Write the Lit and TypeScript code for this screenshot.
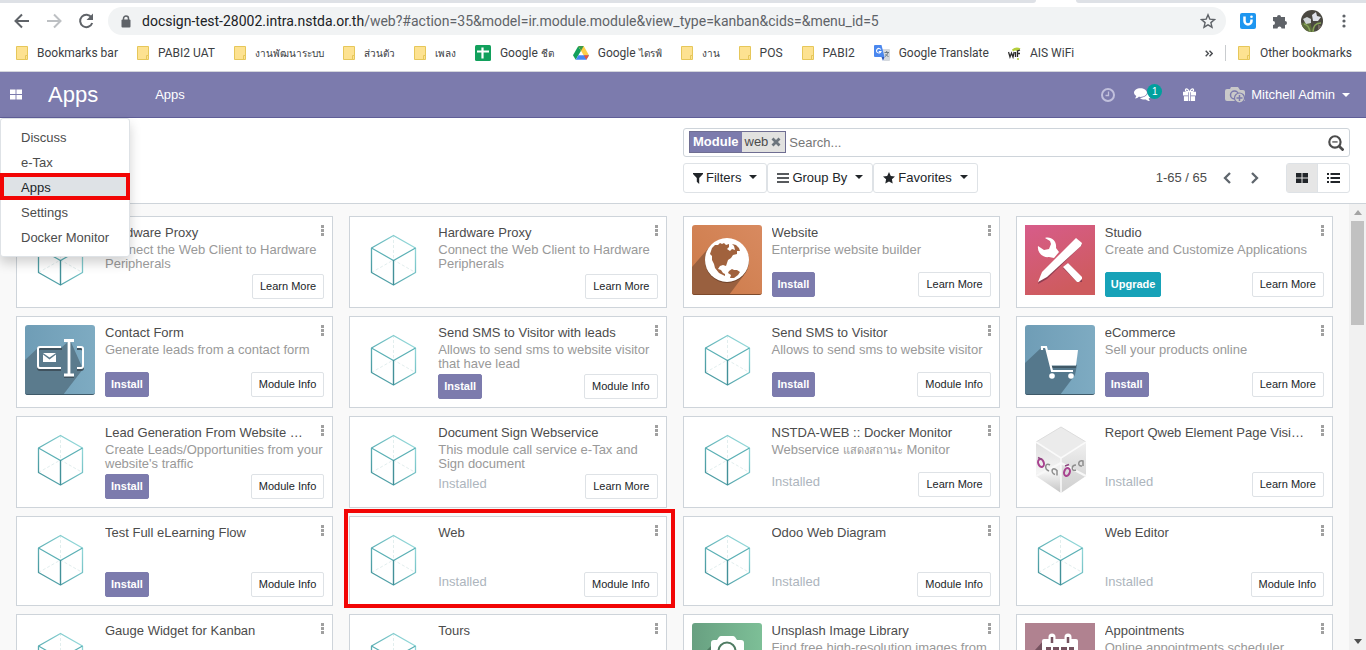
import { LitElement, html, svg, css, nothing } from "lit";
import { customElement, property } from "lit/decorators.js";

type Action = "install" | "upgrade" | "installed";

interface Module {
  name: string;
  summary?: string;
  action: Action;
  info: string;
  icon?: string;
  marked?: boolean;
}

const MODULES: Module[] = [
  { name: "Hardware Proxy", summary: "Connect the Web Client to Hardware Peripherals", action: "installed", info: "Learn More", icon: "cube-plain" },
  { name: "Hardware Proxy", summary: "Connect the Web Client to Hardware Peripherals", action: "installed", info: "Learn More", icon: "cube-plain" },
  { name: "Website", summary: "Enterprise website builder", action: "install", info: "Learn More", icon: "globe" },
  { name: "Studio", summary: "Create and Customize Applications", action: "upgrade", info: "Learn More", icon: "studio" },
  { name: "Contact Form", summary: "Generate leads from a contact form", action: "install", info: "Module Info", icon: "form" },
  { name: "Send SMS to Visitor with leads", summary: "Allows to send sms to website visitor that have lead", action: "install", info: "Module Info" },
  { name: "Send SMS to Visitor", summary: "Allows to send sms to website visitor", action: "install", info: "Module Info" },
  { name: "eCommerce", summary: "Sell your products online", action: "install", info: "Learn More", icon: "cart" },
  { name: "Lead Generation From Website Visits", summary: "Create Leads/Opportunities from your website's traffic", action: "install", info: "Module Info" },
  { name: "Document Sign Webservice", summary: "This module call service e-Tax and Sign document", action: "installed", info: "Learn More" },
  { name: "NSTDA-WEB :: Docker Monitor", summary: "Webservice แสดงสถานะ Monitor", action: "installed", info: "Learn More" },
  { name: "Report Qweb Element Page Visibility", action: "installed", info: "Learn More", icon: "oca" },
  { name: "Test Full eLearning Flow", action: "install", info: "Module Info" },
  { name: "Web", action: "installed", info: "Module Info", marked: true },
  { name: "Odoo Web Diagram", action: "installed", info: "Module Info" },
  { name: "Web Editor", action: "installed", info: "Module Info" },
  { name: "Gauge Widget for Kanban", action: "installed", info: "Module Info" },
  { name: "Tours", action: "installed", info: "Module Info" },
  { name: "Unsplash Image Library", summary: "Find free high-resolution images from Unsplash", action: "install", info: "Module Info", icon: "camera" },
  { name: "Appointments", summary: "Online appointments scheduler", action: "upgrade", info: "Learn More", icon: "calendar" },
];

// Wraps each run of Thai script so that it can have its own font and size.
const withThai = (text: string) =>
  text.split(/([\u0E00-\u0E7F]+)/).map((part, i) => (i % 2 ? html`<span class="thai" lang="th">${part}</span>` : part));

const cube = svg`
  <defs>
    <linearGradient id="edge" x1="0" y1="1" x2="1" y2="0">
      <stop offset="0" stop-color="#3f8f97"/><stop offset="0.55" stop-color="#6cbcc0"/><stop offset="1" stop-color="#a2e2e2"/>
    </linearGradient>
  </defs>
  <path d="M35.5 10v25M13.5 47.5l22-12.500l22 12.500" fill="none" stroke="#e2eeee" stroke-width="1" stroke-dasharray="3 2"/>
  <path d="M35.500 10.500L57.500 23V47.500L35.500 60L13.500 47.500V23Z" fill="none" stroke="url(#edge)" stroke-width="1.300" stroke-linejoin="round"/>
  <path d="M13.500 23L35.500 35.500L57.500 23" fill="none" stroke="#5bb0b5" stroke-width="1.200"/>
  <path d="M35.500 35V60" fill="none" stroke="#439199" stroke-width="1.400"/>`;

const artwork: Record<string, unknown> = {
  cube,
  globe: svg`
    <defs><linearGradient id="g" x1="0" y1="1" x2="1" y2="0"><stop offset="0" stop-color="#cc7a48"/><stop offset="1" stop-color="#d88a60"/></linearGradient></defs>
    <rect width="70" height="70" rx="3" fill="url(#g)"/>
    <path d="M0 42L20 19L52 50L37 70H3A3 3 0 0 1 0 67Z" fill="#99603f"/>
    <path d="M0 67a3 3 0 0 0 3 3h64a3 3 0 0 0 3-3a3 2 0 0 1-3 2H3a3 2 0 0 1-3-2Z" fill="#7d4a2c"/>
    <circle cx="35" cy="36" r="22" fill="#6e4229"/><circle cx="35" cy="35" r="22" fill="#fff"/>
    <path d="M20 23l3-3 3 0 2-2 2 1 2-1 2 2 3-1 0 3-2 2 3 2 2-2 3 1-1-4-2-2 4 1 3 3 1 3-3 0 0 3-4 1-2 3-3 2-1 3-1 3-3-1-3 1-2 3 3 1 2 3 2 1 0 2-6-3-4-5-1-4-2-4 0-4-2-2Z" fill="#a1623d"/>
    <path d="M37 46l3-2 2 1 3 0 3 2-2 3-4 3-4 0 1-3-3-2Z" fill="#a1623d"/>`,
  studio: svg`
    <defs><linearGradient id="s" x1="0" y1="0" x2="0.400" y2="1"><stop offset="0" stop-color="#d75c8a"/><stop offset="1" stop-color="#ce5b5e"/></linearGradient></defs>
    <rect width="70" height="70" fill="url(#s)"/>
    <g fill="#8f3e50" transform="translate(0 1)"><path d="M51 13l6 6-35 34-9 5 4-11Z"/><path d="M38 42l5-5 14 15v4h-5Z"/></g>
    <path d="M20 13c6-2 12 3 11 10l3 4-5 6-5-1c-6 1-12-4-11-11l6 4 5-1 2-5-1-3Z" fill="#fff"/>
    <path d="M51 13l6 5-1 3-34 31-9 5 4-10Z" fill="#fff"/>
    <path d="M38 42l5-4 14 14v2l-3 3h-2Z" fill="#fff"/>`,
  form: svg`
    <defs><linearGradient id="f" x1="0" y1="0" x2="1" y2="0"><stop offset="0" stop-color="#6f9db6"/><stop offset="1" stop-color="#7eabc2"/></linearGradient></defs>
    <rect width="70" height="70" rx="3" fill="url(#f)"/>
    <path d="M0 35L15 21L36 23L45 15L58 44L38 70H3A3 3 0 0 1 0 67Z" fill="#5b7b8d"/>
    <path d="M0 67a3 3 0 0 0 3 3h64a3 3 0 0 0 3-3a3 2 0 0 1-3 2H3a3 2 0 0 1-3-2Z" fill="#3f5a69"/>
    <g fill="none" stroke="#3f525e" stroke-width="2" transform="translate(0 2)"><path d="M37 22H15a2 2 0 0 0-2 2v17a2 2 0 0 0 2 2h21M52 22h4a2 2 0 0 1 2 2v17a2 2 0 0 1-2 2h-4M39 50h10"/></g>
    <g fill="none" stroke="#fff" stroke-width="2"><path d="M36 22H15a2 2 0 0 0-2 2v17a2 2 0 0 0 2 2h21M52 22h4a2 2 0 0 1 2 2v17a2 2 0 0 1-2 2h-4"/><path d="M39 15.500h10M44 15v35M39 50h10" stroke-width="2.800"/></g>
    <path d="M18 28h13l-6.500 4.500Z M18 29.500l6.500 5 6.500-5V37H18Z" fill="#fff"/>`,
  cart: svg`
    <defs><linearGradient id="c" x1="0" y1="0" x2="1" y2="0"><stop offset="0" stop-color="#6f9db6"/><stop offset="1" stop-color="#7eabc2"/></linearGradient></defs>
    <rect width="70" height="70" rx="3" fill="url(#c)"/>
    <path d="M0 38L17 22L52 40L50 50L35 70H3A3 3 0 0 1 0 67Z" fill="#55788c"/>
    <path d="M0 67a3 3 0 0 0 3 3h64a3 3 0 0 0 3-3a3 2 0 0 1-3 2H3a3 2 0 0 1-3-2Z" fill="#3f5a69"/>
    <path d="M27 42h24" stroke="#405866" stroke-width="2"/>
    <path d="M17 25v-3h4l6 24h21" fill="none" stroke="#fff" stroke-width="2.200"/>
    <path d="M22 25h31l-2 15.500H26Z" fill="#fff"/>
    <circle cx="27" cy="51" r="2.800" fill="#fff"/><circle cx="46" cy="51" r="2.800" fill="#fff"/>`,
  oca: svg`
    <defs>
      <linearGradient id="o1" x1="0" y1="0" x2="0" y2="1"><stop offset="0" stop-color="#e0e0e0"/><stop offset="0.600" stop-color="#f4f4f4"/><stop offset="1" stop-color="#c4c4c4"/></linearGradient>
      <linearGradient id="o2" x1="0" y1="0" x2="0" y2="1"><stop offset="0" stop-color="#f0f0f0"/><stop offset="0.500" stop-color="#dedede"/><stop offset="1" stop-color="#cfcfcf"/></linearGradient>
    </defs>
    <path d="M36 2L61 17L36 33L11 17Z" fill="#ebebeb" stroke="#ddd"/>
    <path d="M11 17L36 33V68L11 51Z" fill="url(#o1)"/>
    <path d="M61 17L36 33V68L61 51Z" fill="url(#o2)"/>
    <path d="M11 51L36 38L61 51" fill="none" stroke="#f8f8f8" stroke-width="2"/>
    <path d="M11 17L36 33L61 17M36 33V68" fill="none" stroke="#fafafa" stroke-width="1.500"/>
    <g fill="none" stroke-width="1.500">
      <ellipse cx="16" cy="38" rx="2.800" ry="4" stroke="#a8428f" stroke-width="2" transform="rotate(-20 16 38)"/>
      <path d="M13 32.500l4 2" stroke="#8d4a80"/>
      <path d="M25 40c-5-3-6 4-1 6" stroke="#8d8d8d"/><path d="M32 50.500v-5c-5-5-7 2-2 4" stroke="#8d8d8d"/>
      <ellipse cx="42" cy="47" rx="2.800" ry="4" stroke="#a8428f" stroke-width="2" transform="rotate(20 42 47)"/>
      <path d="M40 41l4-1.500" stroke="#8d4a80"/>
      <path d="M51 40c-5 0-5 7 0 5" stroke="#8d8d8d"/><path d="M58 41v-5c-5-2-6 6-1 5" stroke="#8d8d8d"/>
    </g>`,
  camera: svg`
    <defs><linearGradient id="u" x1="0" y1="0" x2="1" y2="0"><stop offset="0" stop-color="#68a081"/><stop offset="1" stop-color="#7dbf97"/></linearGradient></defs>
    <rect width="70" height="70" rx="3" fill="url(#u)"/>
    <path d="M0 42L20 22L50 70H0Z" fill="#4f7c63"/>
    <path d="M27 14q1-1 2-1h12q1 0 2 1l2 3h4a3 3 0 0 1 3 3v30H19V20a3 3 0 0 1 3-3h3Z" fill="#fff"/>
    <circle cx="35" cy="28" r="8.500" fill="none" stroke="#4f7c63" stroke-width="2"/>`,
  calendar: svg`
    <rect width="70" height="70" fill="#b08290"/>
    <path d="M0 38L20 16L54 60V70H0Z" fill="#75525f"/>
    <path d="M17 18a2 2 0 0 1 2-2h32a2 2 0 0 1 2 2v36H17Z" fill="#fff"/>
    <path d="M27 14v5M43 14v5" stroke="#fff" stroke-width="7" stroke-linecap="round"/>
    <path d="M27 14v6M43 14v6" stroke="#75525f" stroke-width="2.500"/>
    <path d="M21 24h5v4h-5zM28 24h6v4h-6zM36 24h6v4h-6zM44 24h5v4h-5z" fill="#75525f"/>`,
};

const folder = html`<svg viewBox="0 0 12 14" width="12" height="14" aria-hidden="true">
  <path d="M.5.500h11v10h-1.500v3H.5Z" fill="#fde291" stroke="#e6c75a"/><path d="M9.500 9.500h2v4h-2z" fill="#fde291" stroke="#e6c75a"/></svg>`;

const bookmarkIcons: Record<string, unknown> = {
  folder,
  sheet: html`<svg viewBox="0 0 16 16" width="16" height="16" aria-hidden="true"><rect width="16" height="16" rx="1.500" fill="#12a05c"/><path d="M7.500 2.500v11M2 6.500h12" stroke="#fff" stroke-width="2.200"/></svg>`,
  drive: html`<svg viewBox="0 0 16 14" width="16" height="14" aria-hidden="true"><path d="M5.300 0L8 4.700 2.700 13.800 0 9.300Z" fill="#12a05c"/><path d="M5.300 0h5.400L16 9.300h-5.400Z" fill="#ffcf48"/><path d="M5.300 0h5.400L8 4.700Z" fill="#3b9a4a"/><path d="M5.400 9.300H16l-2.700 4.500H2.700Z" fill="#4687f4"/><path d="M13.300 13.800L10.800 9.300H16Z" fill="#e8553c"/></svg>`,
  translate: html`<svg viewBox="0 0 16 16" width="16" height="16" aria-hidden="true"><path d="M7 4h8a1 1 0 0 1 1 1v10a1 1 0 0 1-1 1H10Z" fill="#d5d9de"/><path d="M1 0h6.500l3 12H1a1 1 0 0 1-1-1V1a1 1 0 0 1 1-1Z" fill="#4a87ee"/><path d="M7.500 12h3L9 16Z" fill="#3059b8"/><path d="M6.800 4.500A2.300 2.300 0 1 0 7 6.500H4.800" fill="none" stroke="#fff" stroke-width="1.100"/><path d="M10.500 7.500h4.500M12.700 6v1.500M14 7.500c-.5 2-1.500 3-3 4M11.500 9l3 3" fill="none" stroke="#62717c" stroke-width=".9"/></svg>`,
  wifi: html`<svg viewBox="0 0 13 13" width="13" height="13" aria-hidden="true"><path d="M4 2.500Q8-1 12.500 1.500L10 4.500Q7 2.500 5 4.500Z" fill="#b5cf3c"/><path d="M.5 5l1.500 5 1.500-4 1.500 4 1.200-5M7.500 5v5M9.500 10V4l2.500-1M9.500 6.500h2.500" fill="none" stroke="#2b2b2b" stroke-width="1.300"/><circle cx="10" cy="12" r="1" fill="#b5cf3c"/></svg>`,
};

const BOOKMARKS = [
  ["folder", "Bookmarks bar"], ["folder", "PABI2 UAT"], ["folder", "งานพัฒนาระบบ"], ["folder", "ส่วนตัว"], ["folder", "เพลง"],
  ["sheet", "Google ชีต"], ["drive", "Google ไดรฟ์"], ["folder", "งาน"], ["folder", "POS"], ["folder", "PABI2"],
  ["translate", "Google Translate"], ["wifi", "AIS WiFi"],
];

const caret = html`<svg class="caret" viewBox="0 0 8 4" width="8" height="4" aria-hidden="true"><path d="M0 0h8L4 4Z" fill="currentColor"/></svg>`;

@customElement("browser-bar")
export class BrowserBar extends LitElement {
  static styles = css`
    :host { display: block; background: #fff; color: #3c4043; font: 12px/16px Roboto, sans-serif; border-bottom: 1px solid #d4d6dc; }
    .tabs { display: flex; gap: 40px; height: 3px; }
    .strip { background: #dee1e6; flex: 1038; border-radius: 0 0 3px 0; }
    .strip.rest { flex: 291; border-radius: 0 0 0 3px; }
    .tools { display: flex; align-items: center; height: 36px; padding: 0 11px 0 12px; }
    button { border: 0; padding: 0; background: none; color: #5f6368; display: grid; place-items: center; width: 20px; height: 20px; margin-right: 12px; }
    .nav { display: flex; }
    .address { display: flex; align-items: center; flex: 1; min-width: 0; height: 28px; border-radius: 14px; background: #f1f3f4; padding: 0 8px 0 13px; margin-right: 11px; }
    .lock { margin-right: 11px; flex: none; }
    .url { flex: 1; min-width: 0; overflow: hidden; white-space: nowrap; font-size: 14px; line-height: 20px; color: #5f6368; }
    .host { color: #202124; }
    .address button { margin: 0; }
    .icons { display: flex; align-items: center; gap: 11px; }
    .icons button { margin: 0; width: 21px; height: 22px; }
    .icons .menu { width: 22px; }
    .marks { display: flex; align-items: center; height: 28px; padding: 0 14px 4px 16px; }
    a { display: flex; align-items: center; color: inherit; text-decoration: none; white-space: nowrap; }
    .list { display: flex; gap: 19px; flex: 1; min-width: 0; overflow: hidden; }
    .list a { gap: 9px; }
    .thai { font-family: "Noto Sans", "Open Sans", sans-serif; font-size: 10px; line-height: 14px; }
    .more { font-size: 18px; margin: 0 6px 0 0; color: #4a4d51; }
    .other { gap: 10px; border-left: 1px solid #c9cccf; padding-left: 12px; }
  `;

  render() {
    return html`
      <div class="tabs"><div class="strip"></div><div class="strip rest"></div></div>
      <div class="tools">
        <div class="nav">
          <button aria-label="Back"><svg viewBox="0 0 16 16" width="16" height="16"><path d="M15 8H2M8 1.500L1.500 8 8 14.500" fill="none" stroke="#5f6368" stroke-width="2"/></svg></button>
          <button aria-label="Forward"><svg viewBox="0 0 16 16" width="16" height="16"><path d="M1 8h13M8 1.500L14.500 8 8 14.500" fill="none" stroke="#bdc0c3" stroke-width="2"/></svg></button>
          <button aria-label="Reload"><svg viewBox="0 0 16 16" width="16" height="16"><path d="M13.500 4.500A6.200 6.200 0 1 0 14.200 10" fill="none" stroke="#5f6368" stroke-width="2"/><path d="M15 .5v6.500H8.500Z" fill="#5f6368"/></svg></button>
        </div>
        <div class="address">
          <svg class="lock" viewBox="0 0 10 13" width="10" height="13" aria-hidden="true"><rect y="4.500" x=".5" width="9" height="8" rx="1" fill="#5f6368"/><path d="M2.500 5V3.500a2.500 2.500 0 0 1 5 0V5" fill="none" stroke="#5f6368" stroke-width="1.500"/></svg>
          <span class="url"><span class="host">docsign-test-28002.intra.nstda.or.th</span>/web?#action=35&amp;model=ir.module.module&amp;view_type=kanban&amp;cids=&amp;menu_id=5</span>
          <button aria-label="Bookmark this page"><svg viewBox="0 0 16 16" width="16" height="16"><path d="M8 1.800l1.800 4.300 4.700.4-3.600 3.100 1.100 4.600L8 11.800l-4 2.400 1.100-4.600L1.500 6.500l4.700-.4Z" fill="none" stroke="#5f6368" stroke-width="1.400"/></svg></button>
        </div>
        <div class="icons">
          <button aria-label="Extension"><svg viewBox="0 0 16 16" width="16" height="16"><rect width="16" height="16" rx="2" fill="#1e96f0"/><path d="M4.500 3.500v4.500a3.500 3.500 0 0 0 7 0V6.500" fill="none" stroke="#fff" stroke-width="2.500"/><circle cx="11.500" cy="3.700" r="1.300" fill="#fff"/></svg></button>
          <button aria-label="Extensions"><svg viewBox="0 0 16 16" width="16" height="16"><path d="M1 4h4a2 2 0 1 1 4 0h4v4a2 2 0 1 1 0 4v3.500H9.500a2 2 0 1 0-4 0H1V12a2 2 0 1 0 0-4Z" fill="#5f6368"/></svg></button>
          <button aria-label="Profile"><svg viewBox="0 0 22 22" width="22" height="22"><defs><clipPath id="av"><circle cx="11" cy="11" r="11"/></clipPath></defs><g clip-path="url(#av)"><rect width="22" height="22" fill="#4a4841"/><path d="M0 14l8-5 4 13H2Z" fill="#5c6b3c"/><path d="M12 22q0-9 8-9M9 22Q8 15 3 14" fill="none" stroke="#86a457" stroke-width="1.500"/><path d="M11 5l4-3 1 4 4 1-3 4-5 0Z" fill="#dfe2ea"/><path d="M2 9l4-2 4 2 0 4-5 1Z" fill="#cfd4d6"/><path d="M17 14l4 3-4 3Z" fill="#756b62"/></g></svg></button>
          <button class="menu" aria-label="Menu"><svg viewBox="0 0 4 14" width="4" height="14"><g fill="#5f6368"><circle cx="2" cy="2" r="1.600"/><circle cx="2" cy="7" r="1.600"/><circle cx="2" cy="12" r="1.600"/></g></svg></button>
        </div>
      </div>
      <div class="marks">
        <div class="list">${BOOKMARKS.map(([icon, label]) => html`<a href="#">${bookmarkIcons[icon]}<span>${withThai(label)}</span></a>`)}</div>
        <button class="more" aria-label="More bookmarks"><svg viewBox="0 0 8 7" width="8" height="7"><path d="M.7.700L3.400 3.500.7 6.300M4.500.700L7.200 3.500 4.500 6.300" fill="none" stroke="#4a4d51" stroke-width="1.400"/></svg></button>
        <a class="other" href="#">${folder}<span>Other bookmarks</span></a>
      </div>`;
  }
}

@customElement("module-card")
export class ModuleCard extends LitElement {
  @property({ attribute: false }) module!: Module;

  static styles = css`
    :host { display: block; min-width: 0; position: relative; box-sizing: border-box; background: #fff; border: 1px solid #ced4da; padding: 8px; }
    .body { display: flex; gap: 10px; }
    .art { flex: none; }
    .text { flex: 1; min-width: 0; }
    h2 { margin: 0; padding-right: 20px; font: inherit; line-height: 16px; padding-bottom: 2px; color: #4c4c4c; overflow: hidden; text-overflow: ellipsis; white-space: nowrap; }
    p { margin: 0 0 3px; min-height: 26px; line-height: 14px; color: #999; }
    .thai { font-family: "Noto Sans", "Open Sans", sans-serif; font-size: 11px; line-height: 14px; }
    .foot { display: flex; justify-content: space-between; align-items: flex-start; height: 25px; }
    .state { line-height: 20px; color: #adb5bd; }
    button { font: 11px/15px "Liberation Sans", Arial, sans-serif; border: 1px solid #dee2e6; border-radius: 2px; padding: 4px 7px; background: #fff; color: #212529; height: 25px; white-space: nowrap; }
    .foot .info { margin-left: auto; }
    .install, .upgrade { color: #fff; font-weight: bold; padding: 4px 5px; }
    .install { background: #7c7bad; border-color: #7c7bad; }
    .upgrade { background: #17a2b8; border-color: #17a2b8; }
    .kebab { position: absolute; top: 3px; right: 4px; width: 11px; height: 20px; padding: 0; border: 0; background: none; display: grid; place-items: center; }
    .frame { position: absolute; inset: -8px -9px -3px -6px; border: 4px solid #f20505; pointer-events: none; z-index: 1; }
  `;

  render() {
    const m = this.module;
    return html`
      <div class="body">
        <svg class="art" viewBox="0 0 70 70" width="70" height="70" aria-hidden="true">${artwork[m.icon ?? "cube"] ?? cube}</svg>
        <div class="text">
          <h2>${m.name}</h2>
          <p>${m.summary ? withThai(m.summary) : nothing}</p>
          <div class="foot">
            ${m.action === "install" ? html`<button class="install">Install</button>`
              : m.action === "upgrade" ? html`<button class="upgrade">Upgrade</button>`
              : m.icon === "cube-plain" ? nothing : html`<span class="state">Installed</span>`}
            <button class="info">${m.info}</button>
          </div>
        </div>
      </div>
      <button class="kebab" aria-label="Options"><svg viewBox="0 0 3 11" width="3" height="11"><path d="M0 0h3v3H0zM0 4h3v3H0zM0 8h3v3H0z" fill="#a0a0a0"/></svg></button>
      ${m.marked ? html`<div class="frame"></div>` : nothing}`;
  }
}

@customElement("app-root")
export class AppRoot extends LitElement {
  static styles = css`
    :host { display: flex; flex-direction: column; height: 100vh; overflow: hidden; background: #f9f9f9; color: #4c4c4c; font: 13px/20px "Liberation Sans", Arial, sans-serif; }
    button { font: inherit; color: inherit; background: none; border: 0; padding: 0; }
    a { color: inherit; text-decoration: none; }
    .navbar { position: relative; z-index: 3; flex: none; display: flex; align-items: center; height: 46px; box-sizing: border-box; padding: 0 16px 0 10px; background: #7c7bad; border-bottom: 1px solid #5f5e97; color: #fff; }
    .apps { display: grid; }
    .brand { font-size: 22px; line-height: 30px; margin: 0 57px 0 26px; }
    .systray { display: flex; align-items: center; margin-left: auto; }
    .clock, .gift { display: grid; }
    .clock { margin-right: 19px; }
    .chat { display: flex; align-items: center; margin-right: 20px; }
    .badge { display: grid; place-items: center; width: 15px; height: 15px; border-radius: 8px; background: #00a09d; font-size: 10px; line-height: 15px; margin: 0 0 6px -4px; }
    .gift { margin-right: 28px; }
    .user { display: flex; align-items: center; gap: 6px; white-space: nowrap; }
    .user .caret { margin-left: 1px; }
    .menu { position: absolute; top: 46px; left: 0; box-sizing: border-box; width: 130px; padding: 6px 0; margin: 0; list-style: none; background: #fff; border: 1px solid #dee2e6; border-radius: 3px; box-shadow: 0 6px 12px rgba(0,0,0,.18); color: #4c4c4c; }
    .menu li { position: relative; }
    .menu a { display: block; padding: 0 20px; line-height: 25px; white-space: nowrap; }
    .menu .active { background: #dee2e6; color: #212529; }
    .frame { position: absolute; inset: -2px -1px 0; border: 4px solid #f20505; pointer-events: none; }
    .panel { flex: none; display: flex; justify-content: flex-end; background: #fff; border-bottom: 1px solid #ced4da; padding: 10px 16px; }
    .side { width: 50%; }
    .search { display: flex; align-items: center; height: 29px; box-sizing: border-box; border: 1px solid #ced4da; border-radius: 3px; padding: 0 5px; }
    .facet { display: flex; height: 22px; box-sizing: border-box; border: 1px solid #6f6e92; background: #e2e2e0; line-height: 20px; margin-bottom: 1px; }
    .facet b { background: #7c7bad; color: #fff; padding: 0 3px; }
    .facet span { padding: 0 3px; }
    .facet button { display: grid; place-items: center; padding-right: 4px; }
    input { flex: 1; min-width: 0; border: 0; outline: 0; padding: 0 3px; background: none; font: inherit; color: #4c4c4c; }
    input::placeholder { color: #777; opacity: 1; }
    .zoom { display: grid; }
    .row { display: flex; align-items: center; margin-top: 6px; color: #212529; }
    .row .drop { display: flex; align-items: center; height: 30px; box-sizing: border-box; border: 1px solid #dee2e6; border-radius: 3px; padding: 0 9px; gap: 3px; white-space: nowrap; }
    .drop .caret { margin-left: 5px; margin-bottom: 3px; }
    .pager { margin-left: auto; color: #4c4c4c; white-space: nowrap; }
    .step { display: grid; place-items: center; width: 20px; height: 20px; margin-left: 8px; }
    .first { margin-left: 10px; }
    .switch { display: flex; margin-left: 21px; border: 1px solid #dee2e6; border-radius: 3px; }
    .switch button { display: grid; place-items: center; width: 31px; height: 28px; }
    .switch .on { background: #e6e6e6; border-right: 1px solid #dee2e6; }
    .content { flex: 1; min-height: 0; display: flex; }
    .kanban { flex: 1; min-width: 0; overflow: hidden; display: grid; grid-template-columns: repeat(4, minmax(0, 1fr)); grid-auto-rows: max-content; gap: 8px 16px; padding: 12px 16px; }
    .scroll { flex: none; width: 17px; background: #f1f1f1; display: flex; flex-direction: column; align-items: center; justify-content: space-between; padding: 6px 0; box-sizing: border-box; }
    .thumb { flex: none; width: 13px; height: 24%; background: #c1c1c1; margin: 6px 0 auto; }
  `;

  render() {
    return html`
      <browser-bar></browser-bar>
      <nav class="navbar">
        <button class="apps" aria-label="Applications"><svg viewBox="0 0 13 11" width="12" height="11"><path d="M0 0h6v5H0zM7 0h6v5H7zM0 6h6v5H0zM7 6h6v5H7z" fill="#fff"/></svg></button>
        <a class="brand" href="#">Apps</a>
        <a href="#">Apps</a>
        <div class="systray">
          <button class="clock" aria-label="Activities"><svg viewBox="0 0 14 14" width="14" height="14"><circle cx="7" cy="7" r="6" fill="none" stroke="#c1c0dc" stroke-width="2"/><path d="M7.500 3.500v4H4.500" fill="none" stroke="#c1c0dc" stroke-width="1.300"/></svg></button>
          <button class="chat" aria-label="Conversations"><svg viewBox="0 0 16 14" width="17" height="15"><path d="M6 1C2.700 1 0 2.800 0 5.200c0 1.400.9 2.600 2.200 3.300L1 10.800c1.500-.1 2.600-.7 3.400-1.600 4.300.6 7.800-1.300 7.800-4C12.200 2.800 9.300 1 6 1Z" fill="#fff"/><path d="M13.200 4.200c0 3.500-3.500 5.900-7.600 6 1.300 1.300 3.400 1.900 5.700 1.500.9.900 2 1.400 3.600 1.500l-1.200-2.200C15.100 10.300 16 9.200 16 7.700c0-1.500-1.100-2.800-2.800-3.500Z" fill="#fff"/></svg><span class="badge">1</span></button>
          <button class="gift" aria-label="Gift"><svg viewBox="0 0 14 14" width="15" height="13"><path d="M0 4h5.500v4H0zM8.500 4H14v4H8.500zM1 9h4.500v5H1zM8.500 9H13v5H8.500zM6.200 4h1.600v10H6.200z" fill="#fff"/><path d="M6.500 4C5.500 1 4 .7 3.200 1.200 2.200 2 2.800 4 4.500 4ZM7.500 4c1-3 2.500-3.300 3.300-2.800C11.800 2 11.200 4 9.500 4Z" fill="none" stroke="#fff" stroke-width="1.400"/></svg></button>
          <button class="user"><svg viewBox="0 0 20 18" width="20" height="18" aria-hidden="true"><path d="M6 1h7l2 3h3a2 2 0 0 1 2 2v9H2a2 2 0 0 1-2-2V5a2 2 0 0 1 2-2h3Z" fill="#c9c9c9"/><circle cx="9.500" cy="9" r="4" fill="none" stroke="#7c7bad" stroke-width="1.500"/><circle cx="14.500" cy="12" r="5" fill="#c9c9c9" stroke="#7c7bad" stroke-width="1.200"/><path d="M11.500 12h6M14.500 9v6" stroke="#7c7bad" stroke-width="1.500"/></svg>Mitchell Admin${caret}</button>
        </div>
        <ul class="menu">
          ${["Discuss", "e-Tax", "Apps", "Settings", "Docker Monitor"].map((item) => item === "Apps"
            ? html`<li><a class="active" href="#">${item}</a><div class="frame"></div></li>`
            : html`<li><a href="#">${item}</a></li>`)}
        </ul>
      </nav>
      <section class="panel">
        <div class="side">
          <div class="search">
            <div class="facet"><b>Module</b><span>web</span><button aria-label="Remove filter"><svg viewBox="0 0 10 10" width="10" height="10"><path d="M1.500 1.500l7 7M8.500 1.500l-7 7" stroke="#6c757d" stroke-width="2.800"/></svg></button></div>
            <input type="text" aria-label="Search" placeholder="Search..." />
            <button class="zoom" aria-label="Search options"><svg viewBox="0 0 15 15" width="16" height="16"><circle cx="6.500" cy="6.500" r="5.300" fill="none" stroke="#4c4c4c" stroke-width="2"/><path d="M10.500 10.500l4 4" stroke="#4c4c4c" stroke-width="2.500"/><path d="M4 6.500h5" stroke="#4c4c4c" stroke-width="1.200"/></svg></button>
          </div>
          <div class="row">
            <button class="drop"><svg viewBox="0 0 10 11" width="10" height="11" aria-hidden="true"><path d="M0 0h10v1L6.200 5v6L3.800 8.800V5L0 1Z" fill="#212529"/></svg>Filters ${caret}</button>
            <button class="drop"><svg viewBox="0 0 12 10" width="12" height="10" aria-hidden="true"><path d="M0 1h12M0 5h12M0 9h12" stroke="#212529" stroke-width="1.600"/></svg>Group By ${caret}</button>
            <button class="drop"><svg viewBox="0 0 12 12" width="12" height="12" aria-hidden="true"><path d="M6 0l1.800 3.900 4.200.5-3.100 2.900.8 4.300L6 9.500l-3.700 2.100.8-4.300L0 4.400l4.200-.5Z" fill="#212529"/></svg>Favorites ${caret}</button>
            <span class="pager">1-65 / 65</span>
            <button class="step first" aria-label="Previous"><svg viewBox="0 0 8 12" width="8" height="12"><path d="M7 1L2 6l5 5" fill="none" stroke="#5f666d" stroke-width="2.300"/></svg></button>
            <button class="step" aria-label="Next"><svg viewBox="0 0 8 12" width="8" height="12"><path d="M1 1l5 5-5 5" fill="none" stroke="#5f666d" stroke-width="2.300"/></svg></button>
            <div class="switch">
              <button class="on" aria-label="Kanban view"><svg viewBox="0 0 12 10" width="12" height="10"><path d="M0 0h5.500v4.500H0zM6.500 0H12v4.500H6.500zM0 5.500h5.500V10H0zM6.500 5.500H12V10H6.500z" fill="#212529"/></svg></button>
              <button aria-label="List view"><svg viewBox="0 0 13 10" width="13" height="10"><path d="M0 0h2v2H0zM0 4h2v2H0zM0 8h2v2H0zM3.500 0H13v2H3.500zM3.500 4H13v2H3.500zM3.500 8H13v2H3.500z" fill="#212529"/></svg></button>
            </div>
          </div>
        </div>
      </section>
      <main class="content">
        <div class="kanban">${MODULES.map((m) => html`<module-card .module=${m}></module-card>`)}</div>
        <div class="scroll" aria-hidden="true">
          <svg viewBox="0 0 8 5" width="8" height="5"><path d="M0 5h8L4 0Z" fill="#a3a3a3"/></svg>
          <div class="thumb"></div>
          <svg viewBox="0 0 8 5" width="8" height="5"><path d="M0 0h8L4 5Z" fill="#505050"/></svg>
        </div>
      </main>`;
  }
}
